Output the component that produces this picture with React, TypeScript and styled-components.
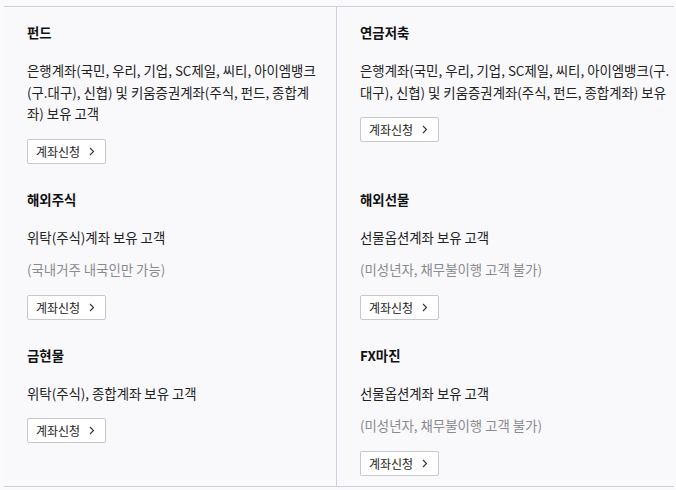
import React from "react";
import styled, { createGlobalStyle } from "styled-components";

const Global = createGlobalStyle`
  html, body { margin: 0; padding: 0; background: #fafafd; }
  body { font-family: "Noto Sans CJK KR", "Noto Sans", sans-serif; }
  * { box-sizing: border-box; }
`;

const Wrap = styled.div`
  padding: 6px 2px 0 4px;
`;

const Grid = styled.ul`
  list-style: none;
  margin: 0;
  padding: 0;
  display: grid;
  grid-template-columns: 333px 337px;
  border-top: 1px solid #cfcfdd;
  border-bottom: 1px solid #cfcfdd;
  background: #f9f9fc;
`;

const Cell = styled.li<{ $left?: boolean }>`
  padding: 15px ${(p) => (p.$left ? "12px" : "0")} 10px 23px;
  border-right: ${(p) => (p.$left ? "1px solid #cfcfdd" : "none")};
  display: flex;
  flex-direction: column;
  align-items: flex-start;
`;

const Title = styled.h3`
  margin: 0;
  font-size: 13.4px;
  line-height: 20px;
  font-weight: 700;
  color: #111;
`;

const Desc = styled.p<{ $muted?: boolean }>`
  margin: ${(p) => (p.$muted ? "11px" : "18px")} 0 0;
  font-size: 13.4px;
  line-height: 21.5px;
  color: ${(p) => (p.$muted ? "#8a8a8f" : "#222")};
`;

const Button = styled.a`
  margin-top: 14px;
  display: inline-flex;
  align-items: center;
  gap: 9px;
  height: 25px;
  padding: 0 10px 0 8px;
  border: 1px solid #c8c8cc;
  border-radius: 2px;
  background: #fff;
  color: #222;
  font-size: 12px;
  text-decoration: none;
  cursor: pointer;
`;

const Chevron = () => (
  <svg width="6" height="9" viewBox="0 0 6 9" fill="none">
    <path d="M1 1l3.5 3.5L1 8" stroke="#333" strokeWidth="1.1" />
  </svg>
);

type Item = { title: string; desc: string; note?: string };

const items: Item[] = [
  {
    title: "펀드",
    desc: "은행계좌(국민, 우리, 기업, SC제일, 씨티, 아이엠뱅크(구.대구), 신협) 및 키움증권계좌(주식, 펀드, 종합계좌) 보유 고객",
  },
  {
    title: "연금저축",
    desc: "은행계좌(국민, 우리, 기업, SC제일, 씨티, 아이엠뱅크(구.대구), 신협) 및 키움증권계좌(주식, 펀드, 종합계좌) 보유",
  },
  { title: "해외주식", desc: "위탁(주식)계좌 보유 고객", note: "(국내거주 내국인만 가능)" },
  { title: "해외선물", desc: "선물옵션계좌 보유 고객", note: "(미성년자, 채무불이행 고객 불가)" },
  { title: "금현물", desc: "위탁(주식), 종합계좌 보유 고객" },
  { title: "FX마진", desc: "선물옵션계좌 보유 고객", note: "(미성년자, 채무불이행 고객 불가)" },
];

export default function App() {
  return (
    <>
      <Global />
      <Wrap>
        <Grid>
          {items.map((it, i) => (
            <Cell key={it.title} $left={i % 2 === 0}>
              <Title>{it.title}</Title>
              <Desc>{it.desc}</Desc>
              {it.note && <Desc $muted>{it.note}</Desc>}
              <Button>
                계좌신청
                <Chevron />
              </Button>
            </Cell>
          ))}
        </Grid>
      </Wrap>
    </>
  );
}
